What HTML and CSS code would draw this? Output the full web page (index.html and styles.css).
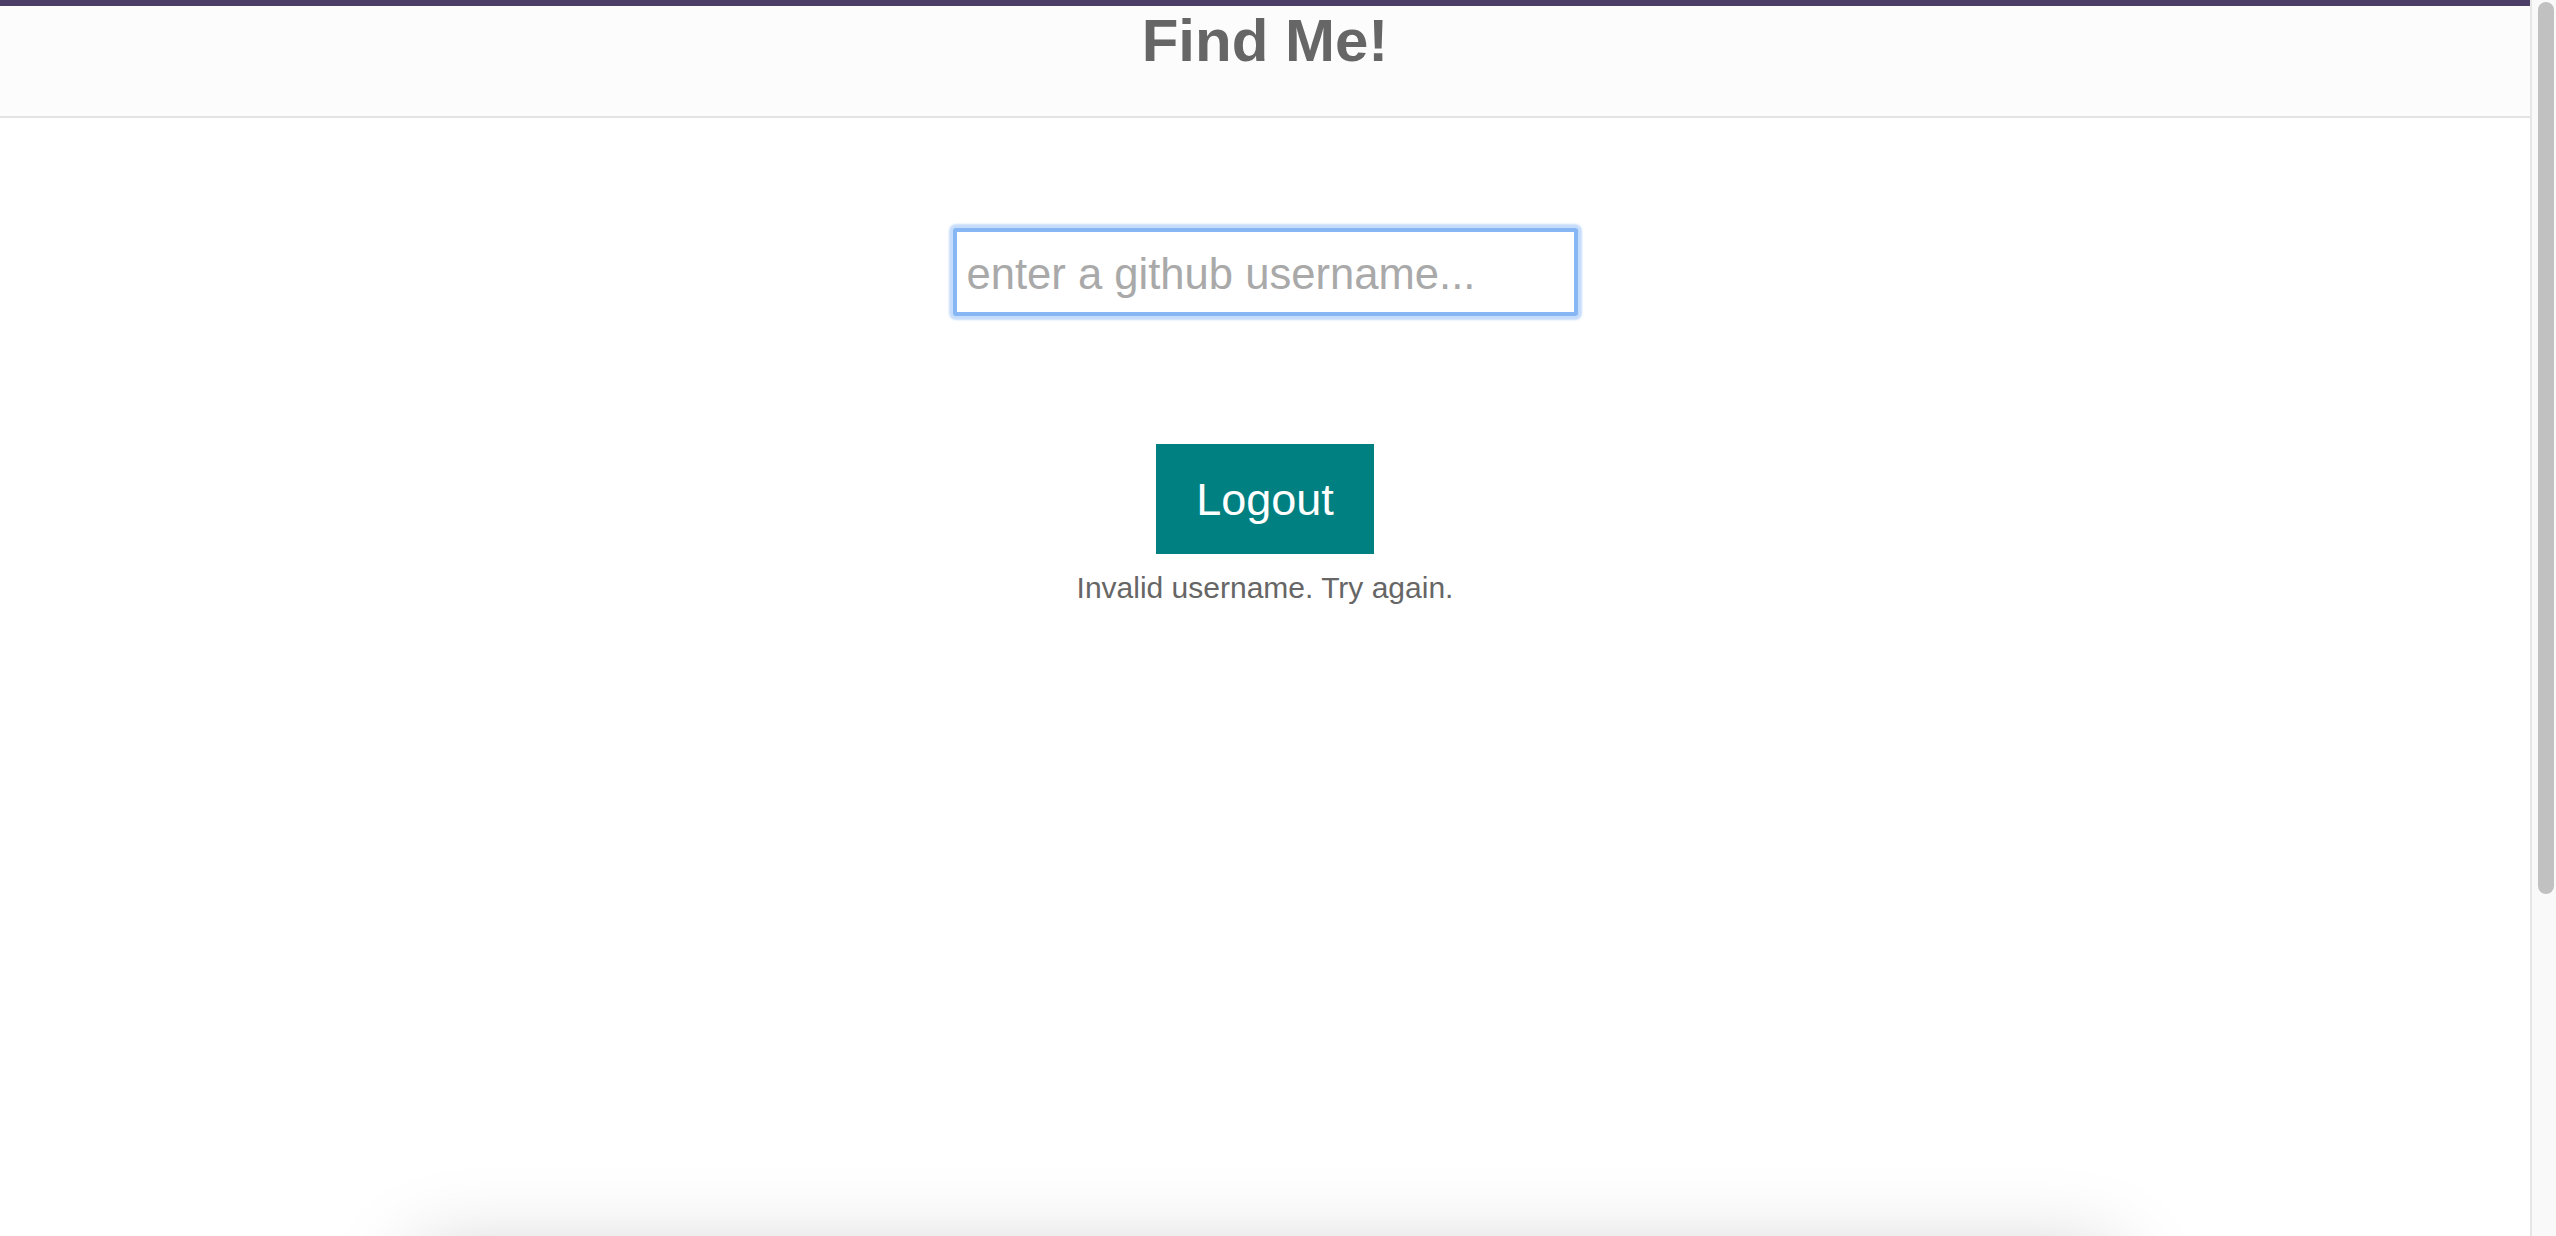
FILE: index.html
```html
<!DOCTYPE html>
<html lang="en">
<head>
<meta charset="utf-8">
<title>Find Me!</title>
<link rel="stylesheet" href="styles.css">
</head>
<body class="page">
  <div class="viewport">
    <main class="main">
      <div class="topbar"></div>
      <header class="header">
        <h1 class="title">Find Me!</h1>
      </header>
      <section class="search">
        <input class="search-input" type="text" placeholder="enter a github username...">
        <button class="logout" type="button">Logout</button>
        <p class="error">Invalid username. Try again.</p>
      </section>
      <section class="results-card"></section>
    </main>
    <div class="scrollbar">
      <div class="scrollbar-thumb"></div>
    </div>
  </div>
</body>
</html>
```

FILE: styles.css
```css
html, body {
  margin: 0;
  padding: 0;
  height: 100%;
  overflow: hidden;
  background: #ffffff;
}

.page {
  font-family: "Liberation Sans", Arial, Helvetica, sans-serif;
  color: #666666;
}

.viewport {
  display: flex;
  flex-direction: row;
  height: 100vh;
}

.main {
  flex: 1 1 auto;
  min-width: 0;
  height: 100vh;
  overflow: hidden;
  display: flex;
  flex-direction: column;
  background: #ffffff;
}

.topbar {
  flex: 0 0 6px;
  height: 6px;
  background: #4b3e67;
}

.header {
  background: #fcfcfc;
  border-bottom: 2px solid #e3e3e3;
  padding: 5px 0 45px;
  text-align: center;
}

.title {
  margin: 0;
  font-size: 60px;
  line-height: 60px;
  font-weight: bold;
  color: #666666;
}

.search {
  display: flex;
  flex-direction: column;
  align-items: center;
  padding-top: 110px;
}

.search-input {
  box-sizing: border-box;
  width: 625px;
  height: 88px;
  padding: 4px 8px 0 10px;
  border: 4px solid #86b6f4;
  border-radius: 3px;
  box-shadow: 0 0 2px 4px rgba(150, 192, 247, 0.55);
  outline: none;
  background: #ffffff;
  font-family: "Liberation Sans", Arial, Helvetica, sans-serif;
  font-size: 43.6px;
  color: #333333;
}

.search-input::placeholder {
  color: #a9a9a9;
}

.logout {
  margin-top: 128px;
  box-sizing: border-box;
  width: 218px;
  height: 110px;
  padding: 2px 0 0;
  border: none;
  background: #008080;
  color: #ffffff;
  font-family: "Liberation Sans", Arial, Helvetica, sans-serif;
  font-size: 45px;
  line-height: 108px;
  cursor: pointer;
}

.error {
  margin: 17px 0 0;
  font-size: 30px;
  line-height: 34px;
  color: #666666;
}

.results-card {
  flex: 0 0 400px;
  width: 1700px;
  margin: 651px auto 0;
  background: #ffffff;
  box-shadow: 0 0 80px rgba(0, 0, 0, 0.22);
}

.scrollbar {
  flex: 0 0 16px;
  width: 16px;
  height: 100vh;
  border-left: 2px solid #e6e6e6;
  background: #f9f9f9;
  padding: 2px 2px 0 6px;
  box-sizing: content-box;
}

.scrollbar-thumb {
  width: 16px;
  height: 892px;
  border-radius: 8px;
  background: #c1c1c1;
}
```
